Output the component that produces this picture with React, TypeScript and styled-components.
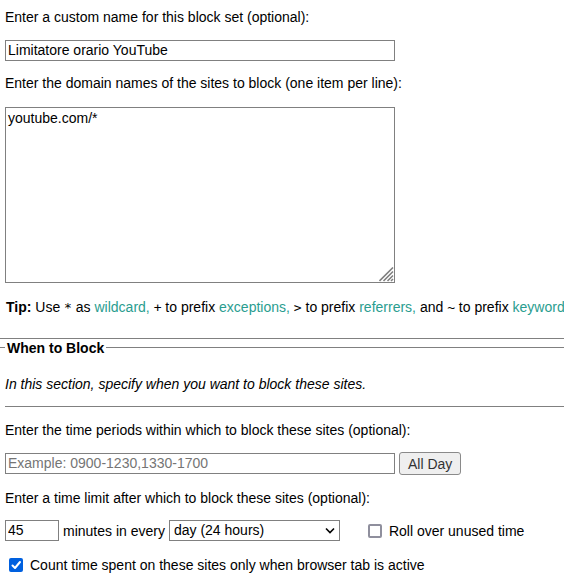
import React, { useState } from "react";
import styled, { createGlobalStyle, css } from "styled-components";

const GlobalStyle = createGlobalStyle`
  *, *::before, *::after { box-sizing: border-box; }
  body {
    margin: 0;
    background: #ffffff;
    color: #000000;
    font: 14px/16px "Liberation Sans", Arial, sans-serif;
    overflow: hidden;
  }
  input, textarea, select, button { font: inherit; color: inherit; margin: 0; }
`;

const Page = styled.main`
  padding-top: 9px;
`;

const Sites = styled.section`
  padding: 0 0 22px 5px;
  border-bottom: 1px solid #808080;
`;

const Label = styled.label<{ $gap: number }>`
  display: block;
  margin-bottom: ${(p) => p.$gap}px;
`;

const boxed = css`
  border: 1px solid #808080;
  border-radius: 0;
  background: #ffffff;
  outline: none;
`;

const TextInput = styled.input<{ $width: number }>`
  ${boxed}
  display: block;
  width: ${(p) => p.$width}px;
  height: 21px;
  padding: 0 2px 1px;
  &::placeholder { color: #757575; opacity: 1; }
`;

const Field = styled.div<{ $gap: number }>`
  display: flex;
  align-items: center;
  gap: 4px;
  margin-bottom: ${(p) => p.$gap}px;
`;

const DomainBox = styled.div`
  position: relative;
  width: 390px;
  margin-bottom: 16px;
`;

const DomainArea = styled.textarea`
  ${boxed}
  display: block;
  width: 100%;
  height: 176px;
  padding: 2px;
  resize: none;
`;

const Grip = styled.svg`
  position: absolute;
  right: 1px;
  bottom: 1px;
  pointer-events: none;
`;

const Tip = styled.p`
  margin: 0;
  padding-left: 1px;
  white-space: nowrap;
  overflow: hidden;
`;

const Symbol = styled.code`
  font: 13px/16px "DejaVu Sans Mono", monospace;
`;

const Link = styled.a`
  color: #2a9d8f;
  text-decoration: none;
`;

const Schedule = styled.fieldset`
  margin: 0;
  padding: 0 0 0 5px;
  border: 0;
  border-top: 1px solid #808080;
  min-width: 0;
`;

const Legend = styled.legend`
  padding: 1px 2px 0;
  font-weight: bold;
`;

const Intro = styled.p`
  margin: 0;
  padding: 20px 0 14px;
  font-style: italic;
`;

const Rule = styled.hr`
  margin: 0 0 15px;
  border: 0;
  border-top: 1px solid #808080;
`;

const Button = styled.button`
  height: 23px;
  padding: 0 8px;
  border: 1px solid #8a8a8a;
  border-radius: 3px;
  background: #efefef;
  color: #333333;
`;

const SelectBox = styled.div`
  position: relative;
`;

const Select = styled.select`
  ${boxed}
  appearance: none;
  display: block;
  width: 171px;
  height: 21px;
  padding: 0 20px 1px 4px;
`;

const Chevron = styled.svg`
  position: absolute;
  right: 5px;
  top: 7px;
  pointer-events: none;
`;

const CheckLabel = styled.label<{ $indent: number }>`
  display: flex;
  align-items: center;
  gap: 7px;
  margin-left: ${(p) => p.$indent}px;
`;

const CheckWrap = styled.span`
  position: relative;
  display: flex;
`;

const Checkbox = styled.input`
  appearance: none;
  width: 14px;
  height: 14px;
  border: 2px solid #8f8f9d;
  border-radius: 2px;
  background: #ffffff;
  &:checked { border-color: #0060df; background: #0060df; }
`;

const Tick = styled.svg`
  position: absolute;
  left: 0;
  top: 0;
  pointer-events: none;
`;

function Check({ indent, initial = false, children }: { indent: number; initial?: boolean; children: React.ReactNode }) {
  const [checked, setChecked] = useState(initial);
  return (
    <CheckLabel $indent={indent}>
      <CheckWrap>
        <Checkbox type="checkbox" checked={checked} onChange={(e) => setChecked(e.target.checked)} />
        {checked && (
          <Tick width="14" height="14" viewBox="0 0 14 14" fill="none" stroke="#fff" strokeWidth="2" strokeLinecap="round" strokeLinejoin="round" aria-hidden="true">
            <path d="M3.5 7.5 6 10l5-6" />
          </Tick>
        )}
      </CheckWrap>
      <span>{children}</span>
    </CheckLabel>
  );
}

export default function App() {
  return (
    <>
      <GlobalStyle />
      <Page>
        <Sites>
          <Label $gap={15} htmlFor="set-name">Enter a custom name for this block set (optional):</Label>
          <Field $gap={14}>
            <TextInput id="set-name" $width={390} defaultValue="Limitatore orario YouTube" />
          </Field>
          <Label $gap={16} htmlFor="domains">Enter the domain names of the sites to block (one item per line):</Label>
          <DomainBox>
            <DomainArea id="domains" defaultValue="youtube.com/*" spellCheck={false} />
            <Grip width="15" height="15" viewBox="0 0 15 15" stroke="#808080" strokeWidth="1.6" aria-hidden="true">
              <path d="M0.5 14 14 0.5M4.5 14 14 4.5M8.5 14 14 8.5M12 14l2-2" />
            </Grip>
          </DomainBox>
          <Tip>
            <b>Tip:</b> Use <Symbol>*</Symbol> as <Link href="#wildcard">wildcard,</Link> <Symbol>+</Symbol> to prefix{" "}
            <Link href="#exceptions">exceptions,</Link> <Symbol>&gt;</Symbol> to prefix{" "}
            <Link href="#referrers">referrers,</Link> and <Symbol>~</Symbol> to prefix{" "}
            <Link href="#keywords">keywords</Link>
          </Tip>
        </Sites>
        <Schedule>
          <Legend>When to Block</Legend>
          <Intro>In this section, specify when you want to block these sites.</Intro>
          <Rule />
          <Label $gap={14} htmlFor="periods">Enter the time periods within which to block these sites (optional):</Label>
          <Field $gap={15}>
            <TextInput id="periods" $width={390} placeholder="Example: 0900-1230,1330-1700" />
            <Button type="button">All Day</Button>
          </Field>
          <Label $gap={14} htmlFor="limit">Enter a time limit after which to block these sites (optional):</Label>
          <Field $gap={16}>
            <TextInput id="limit" $width={54} defaultValue="45" />
            <label htmlFor="interval">minutes in every</label>
            <SelectBox>
              <Select id="interval" defaultValue="day">
                <option value="hour">hour</option>
                <option value="day">day (24 hours)</option>
                <option value="week">week (7 days)</option>
              </Select>
              <Chevron width="10" height="7" viewBox="0 0 10 7" fill="none" stroke="#000" strokeWidth="1.6" aria-hidden="true">
                <path d="m1 1.5 4 4 4-4" />
              </Chevron>
            </SelectBox>
            <Check indent={24}>Roll over unused time</Check>
          </Field>
          <Check indent={4} initial>Count time spent on these sites only when browser tab is active</Check>
        </Schedule>
      </Page>
    </>
  );
}
